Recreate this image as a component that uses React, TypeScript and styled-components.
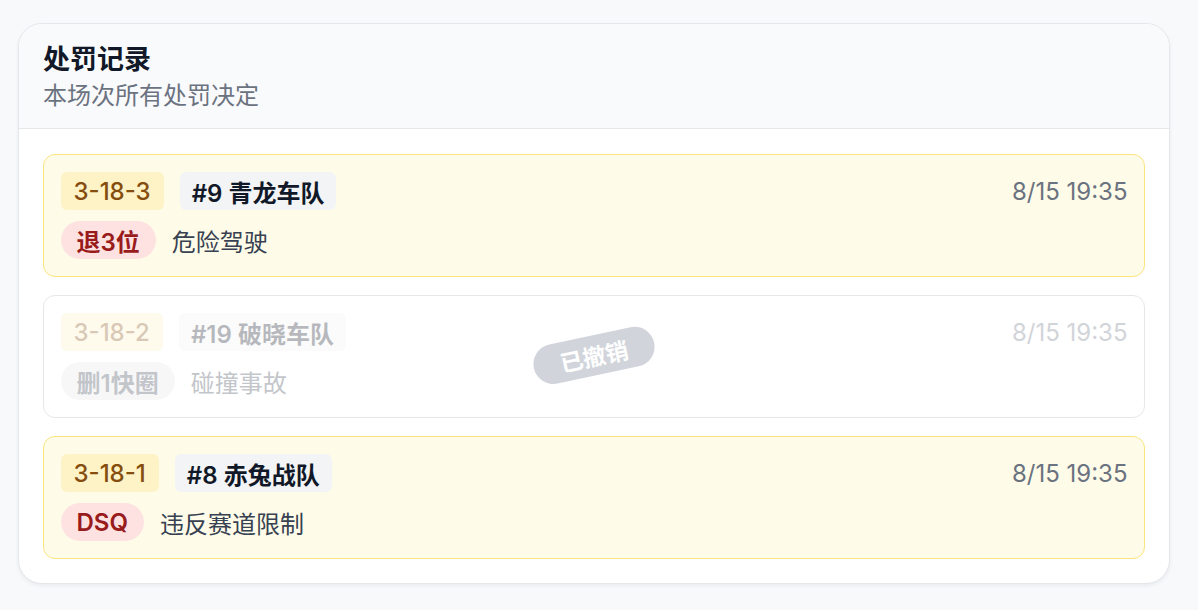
import React from "react";
import styled, { createGlobalStyle, css } from "styled-components";

const GlobalStyle = createGlobalStyle`
  html, body {
    margin: 0;
    padding: 0;
    background: #f8f9fb;
    font-family: "Inter", "Noto Sans CJK SC", sans-serif;
  }
`;

type Penalty = {
  code: string;
  team: string;
  action: string;
  reason: string;
  time: string;
  revoked?: boolean;
};

const penalties: Penalty[] = [
  { code: "3-18-3", team: "#9 青龙车队", action: "退3位", reason: "危险驾驶", time: "8/15 19:35" },
  { code: "3-18-2", team: "#19 破晓车队", action: "删1快圈", reason: "碰撞事故", time: "8/15 19:35", revoked: true },
  { code: "3-18-1", team: "#8 赤兔战队", action: "DSQ", reason: "违反赛道限制", time: "8/15 19:35" },
];

function App() {
  return (
    <>
      <GlobalStyle />
      <Page>
        <Card>
          <Header>
            <Title>处罚记录</Title>
            <Subtitle>本场次所有处罚决定</Subtitle>
          </Header>
          <List>
            {penalties.map((p) => (
              <Item key={p.code} $revoked={p.revoked}>
                <Content $revoked={p.revoked}>
                  <Row>
                    <Left>
                      <Code>{p.code}</Code>
                      <Team>{p.team}</Team>
                    </Left>
                    <Time>{p.time}</Time>
                  </Row>
                  <Row>
                    <Left>
                      <Action $revoked={p.revoked}>{p.action}</Action>
                      <Reason>{p.reason}</Reason>
                    </Left>
                  </Row>
                </Content>
                {p.revoked && <Stamp>已撤销</Stamp>}
              </Item>
            ))}
          </List>
        </Card>
      </Page>
    </>
  );
}

const Page = styled.div`
  padding: 23px 28px 28px 18px;
`;

const Card = styled.div`
  background: #ffffff;
  border: 1.5px solid #e5e7eb;
  border-radius: 24px;
  box-shadow: 0 2px 4px rgba(15, 23, 42, 0.06);
  overflow: hidden;
`;

const Header = styled.div`
  background: #f9fafb;
  border-bottom: 1.5px solid #e5e7eb;
  padding: 17px 24px 17px;
`;

const Title = styled.div`
  font-size: 27px;
  line-height: 37px;
  font-weight: 700;
  color: #111827;
`;

const Subtitle = styled.div`
  margin-top: 3px;
  font-size: 24px;
  line-height: 30px;
  color: #6b7280;
`;

const List = styled.div`
  display: flex;
  flex-direction: column;
  gap: 18px;
  padding: 25px 24px 24px;
`;

const Item = styled.div<{ $revoked?: boolean }>`
  position: relative;
  border-radius: 12px;
  border: 1.5px solid ${(p) => (p.$revoked ? "#e5e7eb" : "#f9e47f")};
  background: ${(p) => (p.$revoked ? "#ffffff" : "#fefce8")};
  padding: 17px 16.5px;
`;

const Content = styled.div<{ $revoked?: boolean }>`
  display: flex;
  flex-direction: column;
  gap: 11px;
  ${(p) =>
    p.$revoked &&
    css`
      opacity: 0.3;
    `}
`;

const Row = styled.div`
  display: flex;
  align-items: center;
  justify-content: space-between;
  height: 38px;
`;

const Left = styled.div`
  display: flex;
  align-items: center;
  gap: 16px;
`;

const Code = styled.span`
  display: inline-flex;
  align-items: center;
  height: 38px;
  padding: 0 13px;
  border-radius: 6px;
  background: #fef3c7;
  color: #854d0e;
  font-size: 24px;
  font-weight: 500;
`;

const Team = styled.span`
  display: inline-flex;
  align-items: center;
  height: 38px;
  padding: 0 12px;
  border-radius: 6px;
  background: #f3f4f6;
  color: #111827;
  font-size: 24px;
  font-weight: 600;
`;

const Action = styled.span<{ $revoked?: boolean }>`
  display: inline-flex;
  align-items: center;
  height: 38px;
  padding: 0 16px;
  border-radius: 19px;
  background: ${(p) => (p.$revoked ? "#e5e7eb" : "#fee2e2")};
  color: ${(p) => (p.$revoked ? "#374151" : "#991b1b")};
  font-size: 24px;
  font-weight: 600;
`;

const Reason = styled.span`
  font-size: 24px;
  color: #374151;
`;

const Time = styled.span`
  font-size: 24px;
  color: #6b7280;
`;

const Stamp = styled.div`
  position: absolute;
  left: 50%;
  top: 50%;
  transform: translate(-50%, -54%) rotate(-12deg);
  height: 40px;
  padding: 0 27px;
  display: flex;
  align-items: center;
  border-radius: 20px;
  background: #d1d5db;
  color: #ffffff;
  font-size: 23px;
  font-weight: 700;
  white-space: nowrap;
`;

export default App;
